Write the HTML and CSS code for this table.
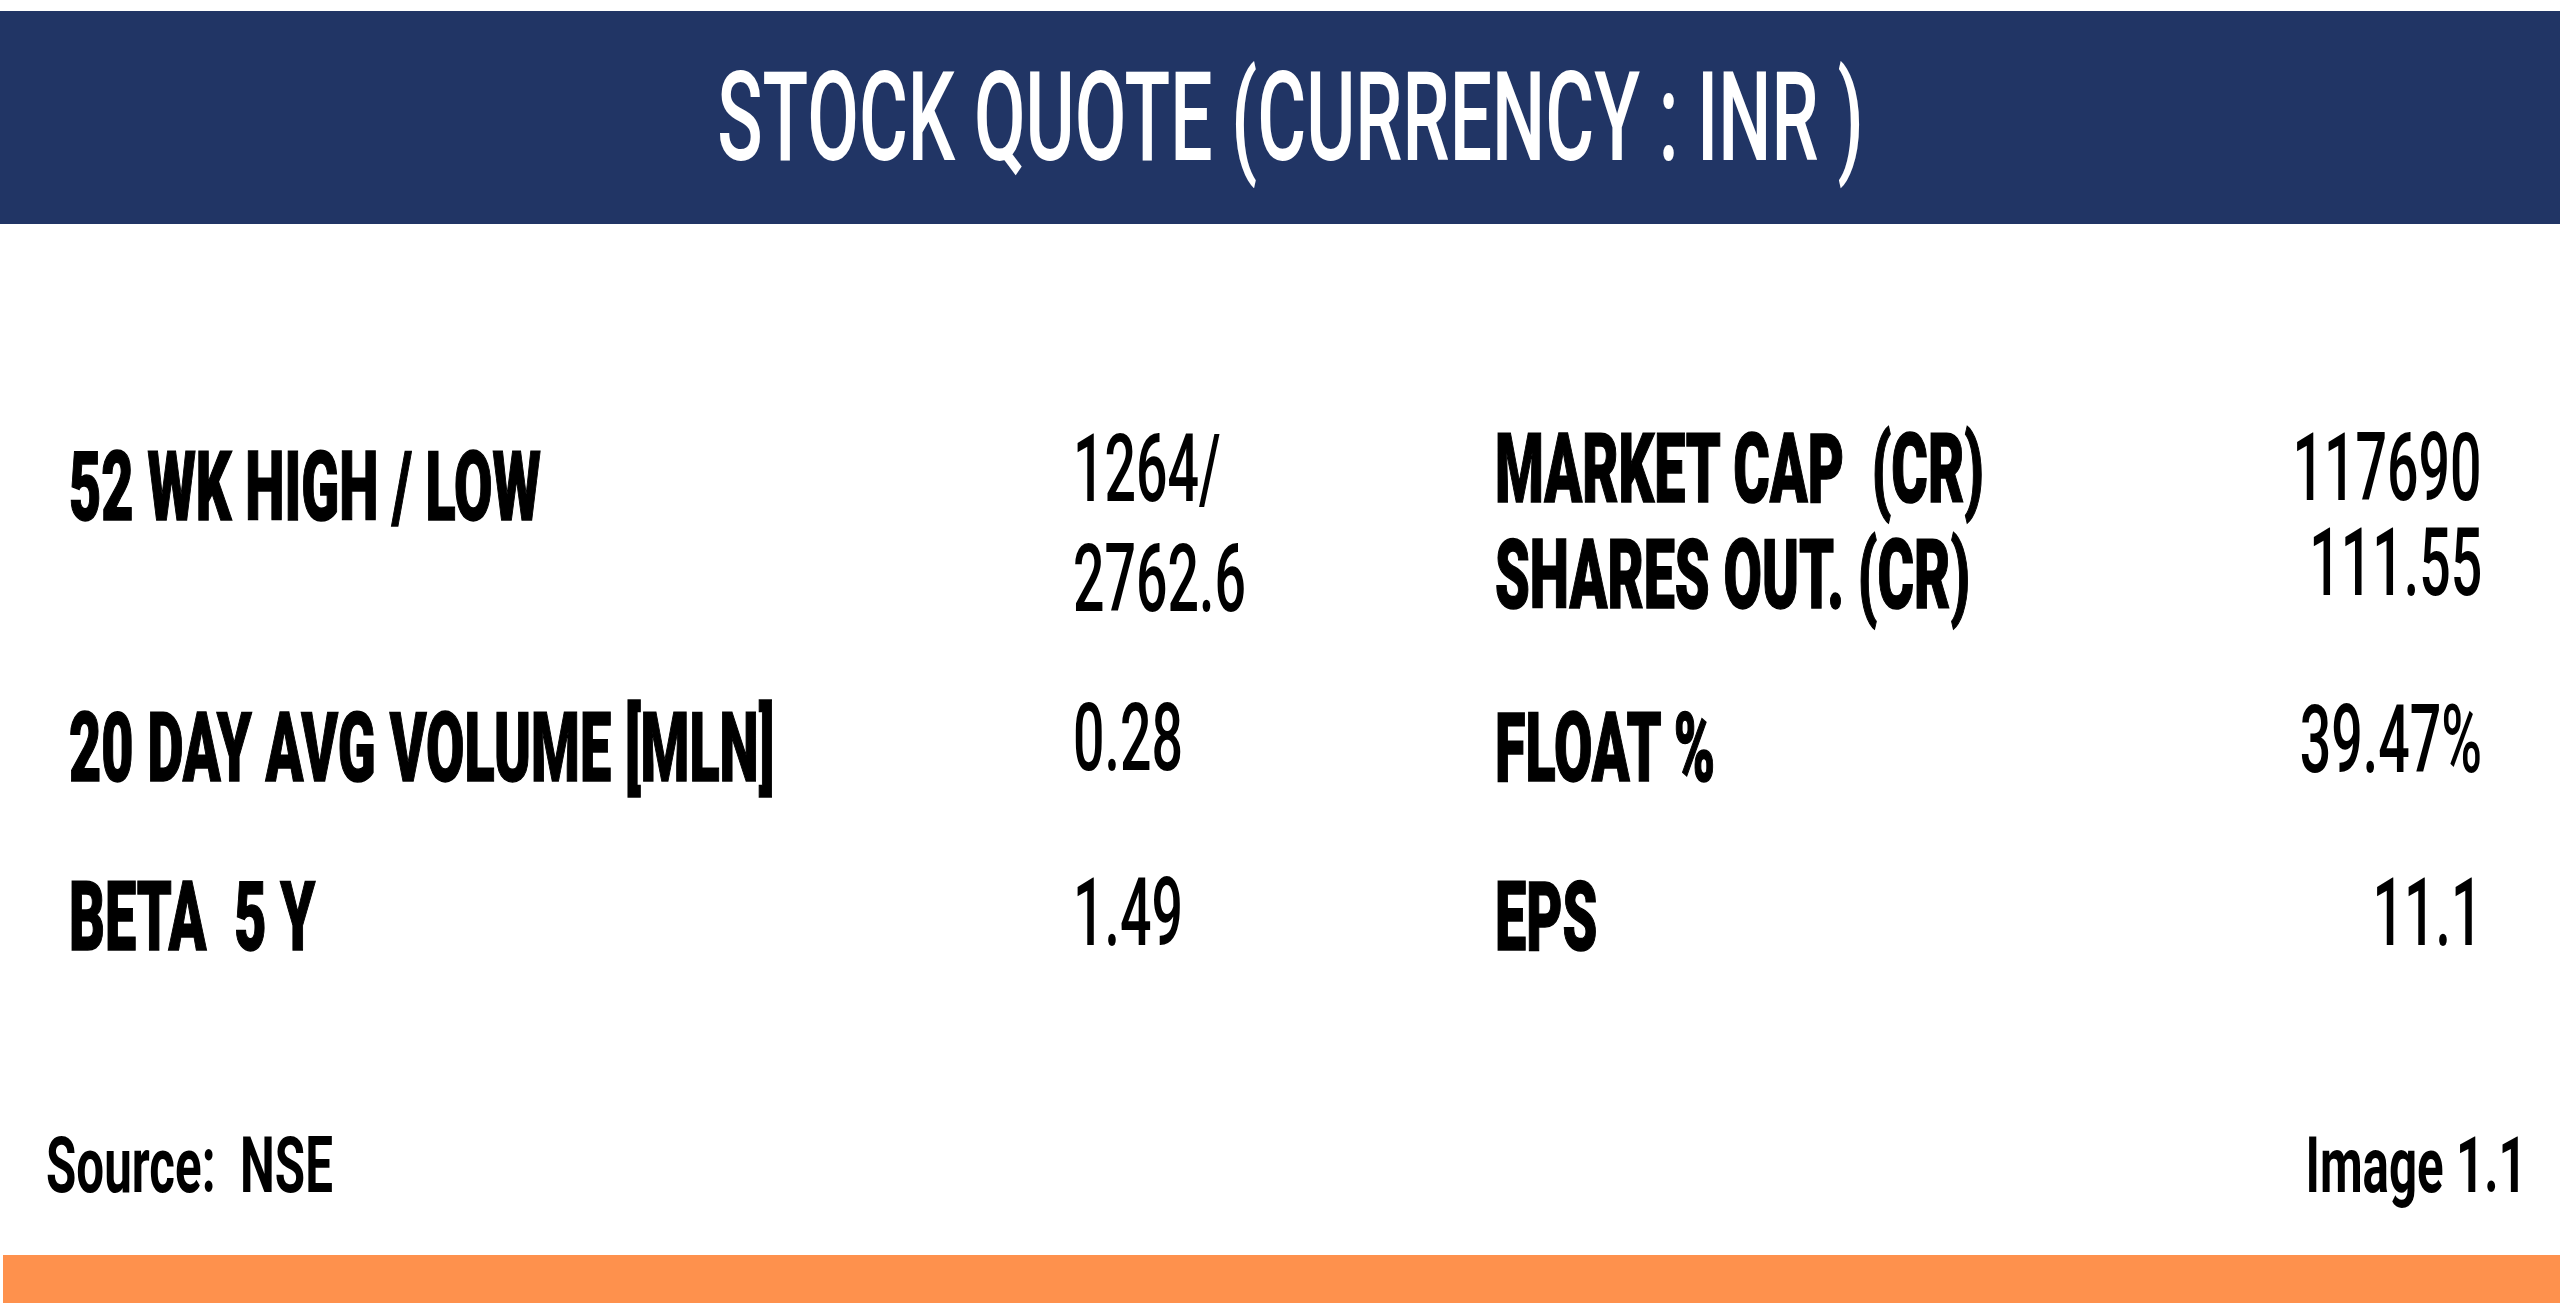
FILE: index.html
```html
<!DOCTYPE html>
<html lang="en">
<head>
<meta charset="utf-8">
<title>Stock Quote</title>
<link rel="stylesheet" href="styles.css">
</head>
<body>
<div class="page">
  <header class="banner">
    <h1 class="title"><span class="sq">STOCK QUOTE (CURRENCY : INR )</span></h1>
  </header>
  <main class="quote">
    <div class="cell label r1 lead"><span class="sq">52 WK HIGH / LOW</span></div>
    <div class="cell value r1 stack gap-a"><span class="sq">1264/</span><span class="sq">2762.6</span></div>
    <div class="cell label r1 stack gap-b"><span class="sq">MARKET CAP&nbsp; (CR)</span><span class="sq">SHARES OUT. (CR)</span></div>
    <div class="cell value end r1 stack tight"><span class="sq">117690</span><span class="sq">111.55</span></div>

    <div class="cell label r2 l-off"><span class="sq">20 DAY AVG VOLUME [MLN]</span></div>
    <div class="cell value r2"><span class="sq">0.28</span></div>
    <div class="cell label r2 l-off"><span class="sq">FLOAT %</span></div>
    <div class="cell value end r2 v-off"><span class="sq">39.47%</span></div>

    <div class="cell label r3 l-off3"><span class="sq">BETA &nbsp;5 Y</span></div>
    <div class="cell value r3"><span class="sq">1.49</span></div>
    <div class="cell label r3 l-off3"><span class="sq">EPS</span></div>
    <div class="cell value end r3"><span class="sq">11.1</span></div>
  </main>
  <footer class="foot">
    <span class="note"><span class="sq">Source: &nbsp;NSE</span></span>
    <span class="note end"><span class="sq">Image 1.1</span></span>
  </footer>
  <div class="stripe"></div>
</div>
</body>
</html>
```
FILE: styles.css
```css
html, body {
  margin: 0;
  padding: 0;
  background: #ffffff;
}

.page {
  width: 2560px;
  height: 1314px;
  display: flex;
  flex-direction: column;
  font-family: Roboto, "Liberation Sans", sans-serif;
  color: #000000;
  overflow: hidden;
}

.sq {
  display: inline-block;
  white-space: nowrap;
  transform: scaleX(var(--sx, 0.6));
  transform-origin: left center;
}

.end .sq {
  transform-origin: right center;
}

.banner {
  margin-top: 11px;
  height: 213px;
  background: #213565;
  display: flex;
  align-items: center;
  justify-content: center;
}

.title {
  margin: 0 0 0 20px;
  font-size: 125px;
  font-weight: 500;
  line-height: 1;
  color: #ffffff;
  --sx: 0.6;
}

.title .sq {
  transform-origin: center center;
}

.quote {
  display: grid;
  grid-template-columns: 1004px 422px minmax(0, 1fr) auto;
  grid-template-rows: 269px 175px 120px;
  padding: 195px 78px 0 69px;
  align-items: start;
}

.cell {
  line-height: 100px;
  min-width: 0;
}

.label {
  font-size: 96px;
  font-weight: 900;
  -webkit-text-stroke: 1.5px #000000;
  --sx: 0.58;
}

.value {
  font-size: 94px;
  font-weight: 500;
  --sx: 0.59;
}

.end {
  text-align: right;
}

.stack {
  display: flex;
  flex-direction: column;
  align-items: flex-start;
}

.end.stack {
  align-items: flex-end;
}

.gap-a { gap: 10px; }
.gap-b { gap: 6px; }
.tight {
  line-height: 95px;
  margin-top: 2px;
}

.lead { margin-top: 18px; }
.l-off { margin-top: 10px; }
.v-off { margin-top: 2px; }
.l-off3 { margin-top: 4px; }

.foot {
  margin-top: 143px;
  display: flex;
  justify-content: space-between;
  padding: 0 33px 0 46px;
  font-size: 77px;
  font-weight: 700;
  line-height: 80px;
  --sx: 0.64;
}

.stripe {
  margin-top: 49px;
  margin-left: 3px;
  height: 48px;
  background: #fe914d;
}
```
